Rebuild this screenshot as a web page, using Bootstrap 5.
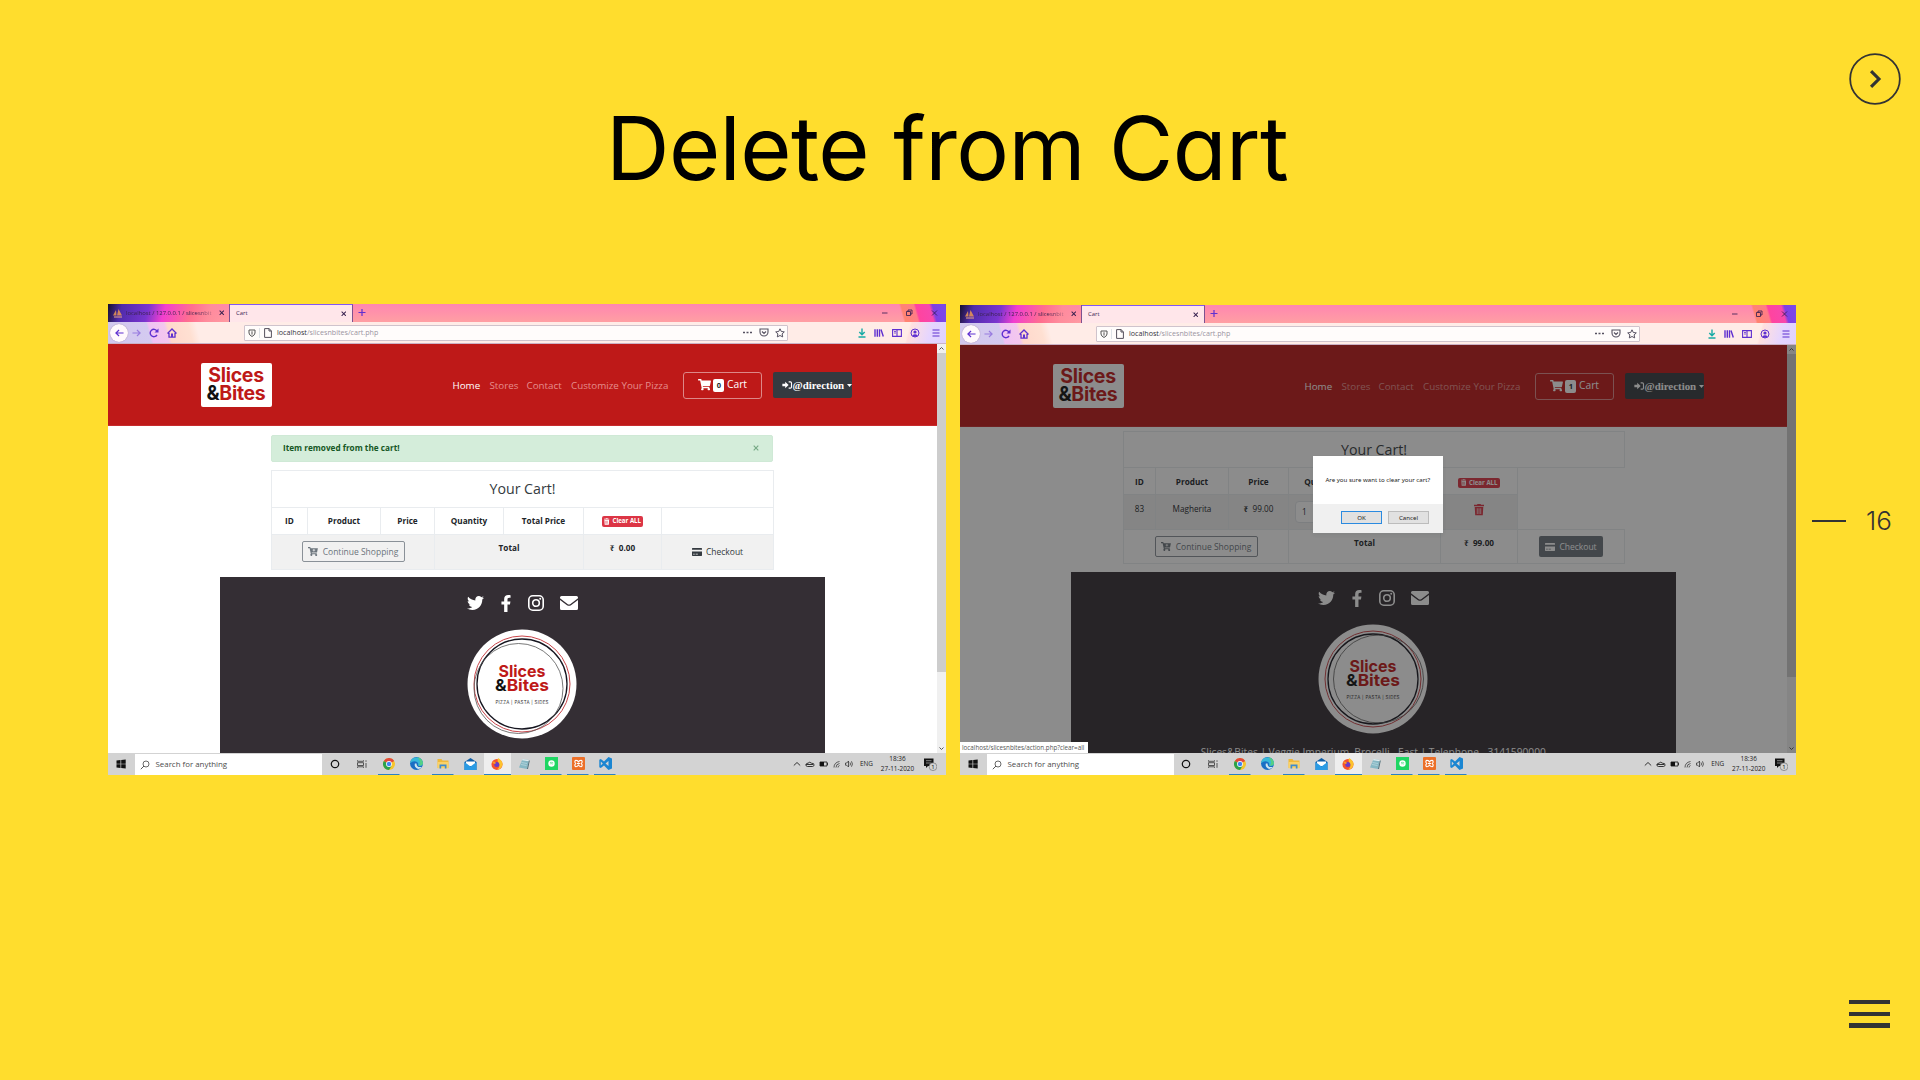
<!DOCTYPE html>
<html lang="en">
<head>
<meta charset="utf-8">
<title>Delete from Cart</title>
<link href="https://cdn.jsdelivr.net/npm/bootstrap@5.3.0/dist/css/bootstrap.min.css" rel="stylesheet">
<script src="https://cdn.jsdelivr.net/npm/bootstrap@5.3.0/dist/js/bootstrap.bundle.min.js" defer></script>
<style>
body{width:1920px;height:1080px;overflow:hidden;background:#ffdd2d;font-family:"Open Sans","Noto Sans",sans-serif;color:#212529}
svg{display:block;flex:none}
.stage{width:1796px;padding-left:108px}
.slide-title{height:304px;padding:95px 0 0 498px;font:400 88px/106px Inter,sans-serif;font-feature-settings:"cv11";letter-spacing:-.6px;color:#000;margin:0;white-space:nowrap}
.rail{width:124px;color:#333}
.rail-next{margin:53px 0 0 52.5px}
.rail-page{margin:398px 0 0 16px;height:36px;font:300 26px/36px Inter,sans-serif;gap:20px}
.rail-page i{width:34px;height:2.5px;background:#333}
.rail-menu{margin:461px 0 0 53px;width:41px;gap:7.500px}
.rail-menu i{height:4.200px;background:#333}
.shot{width:838px;height:471px;overflow:hidden}
.shot-b{width:836px;height:470px;margin-top:1px}
.tabs{height:18px;font-size:5.900px;line-height:17px;color:#3a2350;background:linear-gradient(105deg,#17102e 0,#4f2cab 14px,#7a35cf 40px,#f23fcf 56px,#ff6f8f 82px,#ff8c9c 100px,transparent 125px),linear-gradient(74deg,transparent 765px,#ff8470 767px,#ff7c88 779px,#ff449f 781px,#f748ac 794px,#8040e2 797px,#7a4ae8 808px,#5c36b4 820px,#39236d 828px,#171127 831px),linear-gradient(#ff86b0,#ff9fa3)}
.tab-one{width:122px;padding-left:5px;gap:3px;border-right:1px solid #7d5190}
.tab-one .tab-name{width:90px;overflow:hidden;white-space:nowrap;-webkit-mask:linear-gradient(90deg,#000 70px,transparent 92px)}
.tab-two{width:123px;background:#ffe6ea;border-top:1px solid #8257f5;border-right:1px solid #7d5190;padding:0 6px 0 6px}
.win-ctl{margin-top:4px}
.tools{height:22px;padding:0 6px 0 2px;background:linear-gradient(75deg,#d1c8ed 0,#d4caf0 42px,#f0c2f4 44px,#f3c7ee 59px,#ffd8cc 62px,#ffe0d2 82px,transparent 90px),linear-gradient(105deg,transparent 775px,#ffe0df 777px,#e5d5ff 797px,#d8cffa 835px),#ffece7;border-bottom:1px solid #cbb2c6;color:#5f30d0}
.tool-set{gap:8px}
.back-btn{width:18px;height:18px;border-radius:50%;background:#fff9fc;box-shadow:0 0 1px #886f9b;display:flex;align-items:center;justify-content:center}
.fwd{transform:scaleX(-1);margin:0 8px 0 4px}
.address{margin-left:67px;width:544px;height:16px;background:#fffcfb;border:1px solid #cfc3cc;border-radius:1px;padding:0 2px 0 3px;font-size:7.150px;color:#9a939f;gap:2.500px}
.address b{font-weight:500;color:#35303c}
.url{margin-left:3px}
.site{height:409px;background:#fff}
.shot-b .site{height:408px}
.site-page{width:829px;overflow:hidden}
.shot-b .site-page{width:827px}
.bar-v{width:9px;background:#f0f0f0;color:#555}
.bar-v i{background:#cdcdcd;height:319px}
.shot-b .bar-v i{height:323px}
.brand-bar{height:82px;background:#be1918;display:grid;grid-template-columns:71px 181px 37px 37px 44.500px 112px 79px 11px 78.500px;padding-left:92.500px;align-items:center;color:#e58e8d;font-size:9.800px;white-space:nowrap;border-bottom:1px solid #c72b2d}
.brand-bar>span{padding-top:3.500px}
.brand-logo{height:44px;background:#fff;border-radius:2px;font:700 19.500px/17.500px Inter,sans-serif;color:#be1918;text-align:center;padding-top:4.500px;letter-spacing:-.3px}
.brand-logo em{font-style:normal;color:#111}
.cart-link{height:27px;margin-top:1px;border:1px solid #dd8888;border-radius:3px;color:#fff;font-size:10.300px;gap:2.500px}
.cart-link b{background:#fff;color:#212529;border-radius:2px;width:11px;height:13px;font-size:7.500px;line-height:13px;text-align:center}
.dir-link{height:26px;background:#343a40;border-radius:2px;color:#fff;font:700 10.900px "Liberation Serif",serif;padding-left:9px;margin-top:1px}
.dir-link svg+span{margin-left:-.5px}
.dir-link .tip{margin-left:3px}
.notice{width:502px;height:27px;margin:8.500px 0 8px 163px;padding:0 13px 0 11px;background:#d4edda;border:1px solid #cfe9d6;border-radius:2px;color:#155724;font-size:8.200px;font-weight:700}
.notice svg{color:#74a883}
.cart-grid{width:502px;table-layout:fixed;margin-left:163px;border-collapse:collapse;font-size:8.200px;text-align:center}
.shot-b .cart-grid{width:501px;margin-top:4px}
.cart-grid td,.cart-grid th{border:1px solid #e9ecef;padding:0;vertical-align:middle;line-height:12px;color:#212529;white-space:nowrap}
.shot-b .cart-grid th{padding-top:2px}
.cart-grid .shade>td{background:#f1f1f1}
.cart-grid .grid-title td{font-size:14.200px;line-height:18px;color:#343a40}
.cart-grid .up{padding-bottom:7px}
.qty{margin:0 6px;padding:4px 6px}
.btn-clear{background:#dc3545;color:#fff;border-radius:2px;font-size:6.100px;font-weight:700;line-height:10px;padding:0 2.500px;height:10.500px;gap:3px;display:inline-flex;align-items:center;vertical-align:middle}
.btn-line{border:1px solid #8a9198;color:#6c757d;border-radius:2px;height:21px;width:103px;gap:5px;font-size:8.500px;display:inline-flex;align-items:center;justify-content:center;vertical-align:middle}
.btn-pay{height:21px;width:64px;gap:4px;font-size:8.500px;border-radius:2px;display:inline-flex;align-items:center;justify-content:center;vertical-align:middle;color:#343a40}
.btn-pay.on{background:#6c757d;color:#fff}
.foot{width:605px;height:186px;margin:7.500px 0 0 111.500px;background:#342e34;color:#fff;padding-top:17px}
.shot-b .foot{margin:8px 0 0 110.800px}
.social{height:18px;gap:16px}
.seal{margin-top:16.500px}
.foot-line{font-size:10.200px;line-height:14px;margin-top:11.500px;white-space:nowrap}
.taskbar{height:22px;background:#d3d3d3;font-size:6.400px;color:#222}
.start{width:26.500px}
.finder{width:187px;height:20.500px;margin-top:1px;background:#fff;font-size:7.900px;color:#4c4c4c;padding-left:5px;gap:6px}
.apps{width:297px;height:22px}
.apps>span{width:27px;display:flex;align-items:center;justify-content:center;border-bottom:1.500px solid transparent;background-clip:padding-box}
.apps>.run{background:linear-gradient(#2c80c4,#2c80c4) center bottom/21.500px 1.500px no-repeat border-box}
.apps>.focus{background:#eee;border-bottom-color:#2c80c4;background-clip:padding-box}
.shot-b .apps{margin-left:-.8px}
.tray{margin-left:174.500px;gap:3px}
.clock{width:37px;line-height:10px;text-align:center;margin-left:3px}
.tray .news{margin-left:5px}
.dim{inset:0;background:rgba(25,25,25,.5)}
.ask{left:353px;top:110.500px;width:129.500px;height:77.500px;background:#fff;color:#222;font-family:"Noto Sans",sans-serif;font-size:6.100px}
.ask-text{height:48px}
.ask-row{height:29.500px;background:#f0f0f0;gap:6px;padding:0 13.500px 2px 0}
.ask-row span{width:41px;height:13px;background:#e1e1e1;border:1px solid #bcbcbc;text-align:center;line-height:11px}
.ask-row .hot{border-color:#2a8ae0}
.hint{left:0;bottom:0;height:11px;width:127.500px;background:#fff;font-size:6.250px;line-height:12px;padding-left:2px;color:#555;white-space:nowrap}
</style>
</head>
<body>
<svg width="0" height="0" class="position-absolute">
<defs>
<symbol id="cart" viewBox="0 0 576 512"><path fill="currentColor" d="M528.12 301.319l47.273-208C578.806 78.301 567.391 64 551.99 64H159.208l-9.166-44.81C147.758 8.021 137.93 0 126.529 0H24C10.745 0 0 10.745 0 24v16c0 13.255 10.745 24 24 24h69.883l70.248 343.435C147.325 417.1 136 435.222 136 456c0 30.928 25.072 56 56 56s56-25.072 56-56c0-15.674-6.447-29.835-16.824-40h209.647C430.447 426.165 424 440.326 424 456c0 30.928 25.072 56 56 56s56-25.072 56-56c0-22.172-12.888-41.332-31.579-50.405l5.517-24.276c3.413-15.018-8.002-29.319-23.403-29.319H218.117l-6.545-32h293.145c11.206 0 20.92-7.754 23.403-18.681z"/></symbol>
<symbol id="cartplus" viewBox="0 0 576 512"><path fill="currentColor" fill-rule="evenodd" d="M0 0h130l20 64h420l-50 256H212l7 32h290l-12 60a56 56 0 1 1-60 4H232a56 56 0 1 1-68-9L94 64H0zM320 110v50h-55v40h55v55h40v-55h55v-40h-55v-50z"/></symbol>
<symbol id="signin" viewBox="0 0 18 14"><path fill="currentColor" d="M0 5h5V1.500L11 7l-6 5.500V9H0z"/><path d="M11 1.500h3q2 0 2 2v7q0 2-2 2h-3" fill="none" stroke="currentColor" stroke-width="2"/></symbol>
<symbol id="trash" viewBox="0 0 14 16"><path fill="currentColor" fill-rule="evenodd" d="M0 1h4l1-1h4l1 1h4v2H0zM1 4h12l-.7 12H1.700zM4 6v8h1V6zm2.500 0v8h1V6zM9 6v8h1V6z"/></symbol>
<symbol id="card" viewBox="0 0 18 14"><path fill="currentColor" fill-rule="evenodd" d="M1 0h16q1 0 1 1v2H0V1q0-1 1-1zM0 6h18v7q0 1-1 1H1q-1 0-1-1zm2 4v1.500h3V10zm4.500 0v1.500h4V10z"/></symbol>
<symbol id="twitter" viewBox="0 0 512 512"><path fill="currentColor" d="M459.37 151.716c.325 4.548.325 9.097.325 13.645 0 138.72-105.583 298.558-298.558 298.558-59.452 0-114.68-17.219-161.137-47.106 8.447.974 16.568 1.299 25.34 1.299 49.055 0 94.213-16.568 130.274-44.832-46.132-.975-84.792-31.188-98.112-72.772 6.498.974 12.995 1.624 19.818 1.624 9.421 0 18.843-1.3 27.614-3.573-48.081-9.747-84.143-51.98-84.143-102.985v-1.299c13.969 7.797 30.214 12.67 47.431 13.319-28.264-18.843-46.781-51.005-46.781-87.391 0-19.492 5.197-37.36 14.294-52.954 51.655 63.675 129.3 105.258 216.365 109.807-1.624-7.797-2.599-15.918-2.599-24.04 0-57.828 46.782-104.934 104.934-104.934 30.213 0 57.502 12.67 76.67 33.137 23.715-4.548 46.456-13.32 66.599-25.34-7.798 24.366-24.366 44.833-46.132 57.827 21.117-2.273 41.584-8.122 60.426-16.243-14.292 20.791-32.161 39.308-52.628 54.253z"/></symbol>
<symbol id="facebook" viewBox="0 0 320 512"><path fill="currentColor" d="M279.14 288l14.22-92.66h-88.91v-60.13c0-25.35 12.42-50.06 52.24-50.06h40.42V6.26S260.43 0 225.36 0c-73.22 0-121.080 44.380-121.080 124.720v70.620H22.890V288h81.390v224h100.170V288z"/></symbol>
<symbol id="insta" viewBox="0 0 16 16"><g fill="none" stroke="currentColor" stroke-width="1.600"><rect x=".8" y=".8" width="14.400" height="14.400" rx="4"/><circle cx="8" cy="8" r="3.300"/></g><circle cx="12.200" cy="3.800" r="1" fill="currentColor"/></symbol>
<symbol id="mail" viewBox="0 0 18 14"><path fill="currentColor" d="M1.500 0h15Q18 0 18 1.500v.8L10.500 8Q9 9 7.500 8L0 2.300v-.8Q0 0 1.500 0zM0 4l7 5.200q2 1.300 4 0L18 4v8.500q0 1.500-1.500 1.500h-15Q0 14 0 12.500z"/></symbol>
<symbol id="cross" viewBox="0 0 6 6"><path d="M.7.7l4.600 4.600M5.300.7L.7 5.300" stroke="currentColor" stroke-width="1.100"/></symbol>
<symbol id="pma" viewBox="0 0 10 9"><path d="M0 6.500L3 1l.5 5.500zM4 6.500L5.500 0 9 6.500z" fill="#f5a04c" opacity=".8"/><path d="M1 8h8" stroke="#e7a58a" stroke-width="1"/></symbol>
<symbol id="left" viewBox="0 0 10 8"><path d="M9.500 4H1M4.500.7L1 4l3.500 3.300" fill="none" stroke="currentColor" stroke-width="1.300"/></symbol>
<symbol id="reload" viewBox="0 0 10 10"><path d="M8 7A3.700 3.700 0 1 1 8 3" fill="none" stroke="currentColor" stroke-width="1.400"/><path d="M9.500.5v4H5.500z" fill="currentColor"/></symbol>
<symbol id="home" viewBox="0 0 10 10"><path d="M.5 5.500L5 1l4.500 4.500M2 5v4.200h6V5" fill="none" stroke="currentColor" stroke-width="1.300"/><path d="M4 5.500h2v3.500H4z" fill="currentColor"/></symbol>
<symbol id="shield" viewBox="0 0 8 8"><path d="M1 1h6v3q0 2-3 3.500Q1 6 1 4z" fill="none" stroke="#555" stroke-width="1"/><path d="M4 2.300v3.300" stroke="#555"/></symbol>
<symbol id="page" viewBox="0 0 8 10"><path d="M.6.6h4.600l2.200 2.400v6.400H.6zM5 .6V3h2.400" fill="none" stroke="#55505c" stroke-width="1"/></symbol>
<symbol id="pocket" viewBox="0 0 10 9"><path d="M1 1h8v3a4 4 0 0 1-8 0zM3 3.500L5 5.500l2-2" fill="none" stroke="#555060" stroke-width="1.100"/></symbol>
<symbol id="star" viewBox="0 0 10 10"><path d="M5 .8l1.300 2.700 3 .4-2.200 2 .6 3L5 7.500 2.300 8.900l.6-3-2.200-2 3-.4z" fill="none" stroke="#555060" stroke-width="1"/></symbol>
<symbol id="downl" viewBox="0 0 8 10"><path d="M4 .5v6M1.300 4L4 6.700 6.700 4M.5 9h7" fill="none" stroke="#18aaa5" stroke-width="1.400"/></symbol>
<symbol id="books" viewBox="0 0 10 8"><path d="M1 .3v7.400M3.300.3v7.400M5.500.3v7.400M7 .5l2.300 7" stroke="currentColor" stroke-width="1.400"/></symbol>
<symbol id="side" viewBox="0 0 10 8"><path d="M.6.6h8.800v6.800H.6zM5 .6v6.800" fill="none" stroke="currentColor" stroke-width="1.100"/><path d="M2 2.500h2M2 4h2" stroke="currentColor" stroke-width=".8"/></symbol>
<symbol id="user" viewBox="0 0 10 10"><circle cx="5" cy="5" r="4" fill="none" stroke="currentColor"/><circle cx="5" cy="4" r="1.600" fill="currentColor"/><path d="M2.200 7.500q2.800-2.500 5.600 0L5 9z" fill="currentColor"/></symbol>
<symbol id="burger" viewBox="0 0 8 8"><path d="M.5 1h7M.5 4h7M.5 7h7" stroke="currentColor" stroke-width="1.200"/></symbol>
<symbol id="wctl" viewBox="0 0 60 10"><g fill="none" stroke="#2d1a50" stroke-width=".8"><path d="M0 5h5.500M24.500 3.500h4v4h-4zM26 3.500V2h4v4h-1.500M50 2.500l5 5M55 2.500l-5 5"/></g></symbol>
<symbol id="win" viewBox="0 0 10 10"><path fill="#111" d="M.5 1.500l4-.5v3.700h-4zM5.200 1L9.700.5v4.200H5.200zM.5 5.300h4V9l-4-.5zM5.200 5.300h4.500v4.200L5.200 9z"/></symbol>
<symbol id="lens" viewBox="0 0 10 10"><circle cx="6" cy="4" r="3" fill="none" stroke="#444" stroke-width=".8"/><path d="M4 6L.8 9.200" stroke="#444" stroke-width=".9"/></symbol>
<symbol id="ring" viewBox="0 0 10 10"><circle cx="5" cy="5" r="3.700" fill="none" stroke="#111" stroke-width="1.200"/></symbol>
<symbol id="tview" viewBox="0 0 10 8"><path d="M.5.3v1h6v-1M.5 2.700h6v2.800h-6zM.5 7.800v-1h6v1M9 .3v1.500M9 3v4.800" fill="none" stroke="#333" stroke-width=".8"/></symbol>
<symbol id="chrome" viewBox="0 0 12 12"><circle cx="6" cy="6" r="6" fill="#f7c52d"/><path d="M6 6L.8 3A6 6 0 0 1 11.200 3z" fill="#e2483b"/><path d="M6 6L.8 3A6 6 0 0 0 6 12l2.500-4z" fill="#2ba24c"/><circle cx="6" cy="6" r="2.900" fill="#fff"/><circle cx="6" cy="6" r="2.200" fill="#4285f4"/></symbol>
<symbol id="edge" viewBox="0 0 12 12"><circle cx="6" cy="6" r="6" fill="#1a6fc4"/><path d="M.2 5a6 6 0 0 1 11.800 1q-.5 2.500-3.500 2.300Q7 8 7.700 6.500 7 4 4 4 1.500 4 .2 6z" fill="#38b9d8"/><path d="M7 .2A6 6 0 0 1 12 6.500Q11 8.500 8 8q3-3-1-7.800z" fill="#54cf86"/><path d="M4.500 6q-1 3.500 3 5 2 0 3.300-1.800Q6 10 6 6z" fill="#cfe6ef"/></symbol>
<symbol id="folder" viewBox="0 0 12 11"><path d="M.5 1h4l1 1.500h6V10H.5z" fill="#f0b93a"/><path d="M.5 4h11v6.300H.5z" fill="#fad268"/><path d="M2.500 10.500V6.500h7v4H7.800V8.200H4.200v2.300z" fill="#3d8bd0"/></symbol>
<symbol id="post" viewBox="0 0 12 12"><path d="M0 4l6-4 6 4v8H0z" fill="#0f5fa8"/><path d="M1.500 3.500h9V8h-9z" fill="#fff"/><path d="M0 4l6 4.500L12 4v8H0z" fill="#2a9be4"/></symbol>
<symbol id="fox" viewBox="0 0 12 12"><circle cx="6" cy="6.400" r="5.500" fill="#f5532d"/><path d="M7 0q5 3 4.500 7Q10 11.500 6 11.500 10 9 7.500 5 6 3 7 0z" fill="#fdc32e"/><circle cx="5.800" cy="6.500" r="2.500" fill="#6a3bc8"/><path d="M1 4q3-1.500 4 1.200L3 6z" fill="#ff9a24"/></symbol>
<symbol id="note" viewBox="0 0 12 12"><path d="M4.500 1L11 2 9 11l-8-1.500z" fill="#86b8c4"/><path d="M4.500 1L11 2l-.3 1.200L4 2.200z" fill="#e5eef0"/><path d="M11 2l.7 1L10 11H9z" fill="#4e6d78"/><path d="M3.500 4.500l5.500 1M3 6.500l5.500 1" stroke="#cae2e8" stroke-width=".6"/></symbol>
<symbol id="spot" viewBox="0 0 13 13"><path d="M0 0h13v13H0z" fill="#1fd663"/><circle cx="6.500" cy="6.500" r="3.200" fill="#fff"/><path d="M5 5.500q1.800-.5 3.200.4M5.200 6.800q1.500-.4 2.600.3" stroke="#1fd663" stroke-width=".6" fill="none"/></symbol>
<symbol id="xampp" viewBox="0 0 13 13"><rect width="13" height="13" rx="1" fill="#ec6f28"/><path d="M4 3.300q2 0 2.500 2Q7 3.300 9 3.300q1.500.2 1 2.200l-.8 1 .8 1q.5 2-1 2.200-2 0-2.500-2-.5 2-2.500 2-1.500-.2-1-2.200l.8-1-.8-1q-.5-2 1-2.200zM5 6.500h3" fill="none" stroke="#fff" stroke-width="1.100"/></symbol>
<symbol id="code" viewBox="0 0 13 13"><path d="M9.500 0L13 1.500v10L9.500 13 5 8.500 1.800 11 .3 10.200V2.800L1.800 2 5 4.500zM9.500 4L6.500 6.500l3 2.500zM1.800 4.500v4l2-2z" fill="#1b86d2" fill-rule="evenodd"/></symbol>
<symbol id="trayi" viewBox="0 0 60 10"><g fill="none" stroke="#222" stroke-width=".9"><path d="M.8 6.500L4 3.500l3.200 3"/><path d="M14.500 7.500q-2-.3-1.600-2Q13.500 4 15 4.200q1.700-2 3.500 0 3 0 2.500 2-.3 1.300-1.500 1.300zM13 5.500h7"/><path d="M27 3h7v4h-7zM34.500 4v2"/><path d="M41 8.500q0-5 5.500-6M43 8.500q0-3.500 3.500-4M45 8.500q0-1.500 1.500-2" stroke-width=".7"/><path d="M52.500 4h1.200L55.500 2v6L53.700 6.200h-1.200zM57 3.500q1 1.500 0 3M58.500 2.300q1.800 2.700 0 5.400" stroke-width=".7"/></g><path fill="#111" d="M27 3h4v4h-4z"/></symbol>
<symbol id="bell" viewBox="0 0 13 13"><path d="M0 .5h9.500v7.500H4L2 10V8H0z" fill="#111"/><path d="M2 2.700h5.500M2 5h5.500" stroke="#d3d3d3" stroke-width=".6"/><circle cx="9" cy="8.700" r="3.900" fill="#d3d3d3" stroke="#555" stroke-width=".5"/><text x="9" y="11" font-size="6" text-anchor="middle" fill="#111">1</text></symbol>
</defs>
</svg>

<template id="browser-bars">
  <div class="tabs d-flex">
    <div class="tab-one d-flex align-items-center"><svg width="10" height="9"><use href="#pma"/></svg><span class="tab-name">localhost / 127.0.0.1 / slicesnbit</span><svg width="5.500" height="5.500"><use href="#cross"/></svg></div>
    <div class="tab-two d-flex align-items-center justify-content-between"><span>Cart</span><svg width="5.500" height="5.500"><use href="#cross"/></svg></div>
    <svg class="ms-1 mt-1" width="9" height="9" viewBox="0 0 9 9"><path d="M5 1v7M1.500 4.500h7" stroke="#5f30d0" stroke-width="1.200"/></svg>
    <svg class="win-ctl ms-auto me-1" width="60" height="10"><use href="#wctl"/></svg>
  </div>
  <div class="tools d-flex align-items-center">
    <span class="back-btn"><svg width="9" height="8"><use href="#left"/></svg></span>
    <svg width="9" height="8" class="fwd opacity-50"><use href="#left"/></svg>
    <svg width="10" height="10" class="me-2"><use href="#reload"/></svg>
    <svg width="10" height="10"><use href="#home"/></svg>
    <div class="address d-flex align-items-center"><svg width="8" height="8"><use href="#shield"/></svg><span class="border-start ps-1"><svg width="8" height="10"><use href="#page"/></svg></span><span class="url"><b>localhost</b>/slicesnbites/cart.php</span>
      <svg class="ms-auto me-1" width="9" height="3" viewBox="0 0 9 3"><path d="M0 1.500h2M3.500 1.500h2M7 1.500h2" stroke="#555060" stroke-width="1.600"/></svg><svg width="10" height="9" class="me-1"><use href="#pocket"/></svg><svg width="10" height="10"><use href="#star"/></svg></div>
    <div class="tool-set d-flex align-items-center ms-auto"><svg width="8" height="10"><use href="#downl"/></svg><svg width="10" height="8"><use href="#books"/></svg><svg width="10" height="8"><use href="#side"/></svg><svg width="10" height="10" class="me-1"><use href="#user"/></svg><svg width="8" height="8"><use href="#burger"/></svg></div>
  </div>
</template>
<template id="scroll-bar">
  <svg width="9" height="9" viewBox="0 0 9 9"><path d="M2.500 5.500l2-2 2 2" fill="none" stroke="currentColor"/></svg><i></i><svg class="mt-auto" width="9" height="9" viewBox="0 0 9 9"><path d="M2.500 3.500l2 2 2-2" fill="none" stroke="currentColor"/></svg>
</template>
<template id="social-row">
  <svg width="17" height="18"><use href="#twitter"/></svg><svg width="12" height="17"><use href="#facebook"/></svg><svg width="16" height="16"><use href="#insta"/></svg><svg width="18" height="14"><use href="#mail"/></svg>
</template>
<template id="task-items">
  <div class="start d-flex justify-content-center"><svg width="10" height="10"><use href="#win"/></svg></div>
  <div class="finder d-flex align-items-center"><svg width="10" height="10"><use href="#lens"/></svg>Search for anything</div>
  <div class="apps d-flex"><span><svg width="10" height="10"><use href="#ring"/></svg></span><span><svg width="10" height="8"><use href="#tview"/></svg></span><span class="run"><svg width="12" height="12"><use href="#chrome"/></svg></span><span><svg width="13" height="13"><use href="#edge"/></svg></span><span class="run"><svg width="12" height="11"><use href="#folder"/></svg></span><span><svg width="13" height="12"><use href="#post"/></svg></span><span class="focus"><svg width="12" height="12"><use href="#fox"/></svg></span><span><svg width="12" height="12"><use href="#note"/></svg></span><span class="run"><svg width="13" height="13"><use href="#spot"/></svg></span><span class="run"><svg width="13" height="13"><use href="#xampp"/></svg></span><span class="run"><svg width="13" height="13"><use href="#code"/></svg></span></div>
  <div class="tray d-flex align-items-center"><svg width="60" height="10"><use href="#trayi"/></svg><span class="ms-1">ENG</span><span class="clock">18:36<br>27-11-2020</span><svg class="news" width="13" height="13"><use href="#bell"/></svg></div>
</template>

<div class="d-flex h-100">
  <main class="stage">
    <h1 class="slide-title">Delete from Cart</h1>
    <div class="d-flex align-items-start justify-content-between">
      <section class="shot">
        <div data-part="browser-bars"></div>
        <div class="site d-flex">
          <div class="site-page">
            <nav class="brand-bar">
              <div class="brand-logo">Slices<br><em>&amp;</em>Bites</div><span></span>
              <span class="text-white">Home</span><span>Stores</span><span>Contact</span><span>Customize Your Pizza</span>
              <div class="cart-link d-flex align-items-center justify-content-center"><svg width="13" height="11.500"><use href="#cart"/></svg><b>0</b><span>Cart</span></div><span></span>
              <div class="dir-link d-flex align-items-center"><svg width="11" height="8"><use href="#signin"/></svg><span>@direction</span><svg class="tip" width="5" height="3" viewBox="0 0 5 3"><path d="M0 0h5L2.500 3z" fill="#fff"/></svg></div>
            </nav>
            <div class="notice d-flex align-items-center justify-content-between"><span>Item removed from the cart!</span><svg width="6" height="6"><use href="#cross"/></svg></div>
            <table class="cart-grid">
              <colgroup><col style="width:36px"><col style="width:73px"><col style="width:54px"><col style="width:69px"><col style="width:80px"><col style="width:78px"><col style="width:112px"></colgroup>
              <tr class="grid-title" style="height:37px"><td colspan="7">Your Cart!</td></tr>
              <tr style="height:27px"><th>ID</th><th>Product</th><th>Price</th><th>Quantity</th><th>Total Price</th><th><span class="btn-clear"><svg width="5.500" height="7"><use href="#trash"/></svg>Clear ALL</span></th><th></th></tr>
              <tr class="shade" style="height:35px"><td colspan="3"><span class="btn-line"><svg width="10" height="9"><use href="#cartplus"/></svg>Continue Shopping</span></td><td colspan="2" class="up"><b>Total</b></td><td class="up"><b>₹&nbsp; 0.00</b></td><td><span class="btn-pay"><svg width="10" height="8"><use href="#card"/></svg>Checkout</span></td></tr>
            </table>
            <footer class="foot">
              <div class="social d-flex align-items-center justify-content-center" data-part="social-row"></div>
              <svg class="seal mx-auto" width="110" height="110" viewBox="0 0 110 110"><circle cx="55" cy="55" r="54.500" fill="#fff"/><g fill="none"><circle cx="55" cy="55" r="48" stroke="#c9454a" stroke-width="1"/><circle cx="55" cy="55" r="45" stroke="#15151f" stroke-width="1.300"/><ellipse cx="51.500" cy="59.500" rx="44.500" ry="45" stroke="#555" stroke-width=".8"/></g><g font-family="Inter" font-weight="700" text-anchor="middle" fill="#be1918"><text x="55" y="47.500" font-size="16.500" textLength="47" lengthAdjust="spacingAndGlyphs">Slices</text><text x="55" y="62" font-size="16.500" textLength="54" lengthAdjust="spacingAndGlyphs"><tspan fill="#111">&amp;</tspan>Bites</text><text x="55" y="75" font-size="4.500" font-weight="400" fill="#333" textLength="53">PIZZA | PASTA | SIDES</text></g></svg>
            </footer>
          </div>
          <div class="bar-v d-flex flex-column" data-part="scroll-bar"></div>
        </div>
        <div class="taskbar d-flex align-items-center" data-part="task-items"></div>
      </section>
      <section class="shot shot-b">
        <div data-part="browser-bars"></div>
        <div class="site d-flex position-relative">
          <div class="site-page">
            <nav class="brand-bar">
              <div class="brand-logo">Slices<br><em>&amp;</em>Bites</div><span></span>
              <span class="text-white">Home</span><span>Stores</span><span>Contact</span><span>Customize Your Pizza</span>
              <div class="cart-link d-flex align-items-center justify-content-center"><svg width="13" height="11.500"><use href="#cart"/></svg><b>1</b><span>Cart</span></div><span></span>
              <div class="dir-link d-flex align-items-center"><svg width="11" height="8"><use href="#signin"/></svg><span>@direction</span><svg class="tip" width="5" height="3" viewBox="0 0 5 3"><path d="M0 0h5L2.500 3z" fill="#fff"/></svg></div>
            </nav>
            <table class="cart-grid">
              <colgroup><col style="width:32px"><col style="width:73px"><col style="width:60px"><col style="width:68px"><col style="width:84px"><col style="width:77px"><col style="width:107px"></colgroup>
              <tr class="grid-title" style="height:36px"><td colspan="7">Your Cart!</td></tr>
              <tr style="height:27px"><th>ID</th><th>Product</th><th>Price</th><th>Quantity</th><th>Total Price</th><th><span class="btn-clear"><svg width="5.500" height="7"><use href="#trash"/></svg>Clear ALL</span></th></tr>
              <tr class="shade" style="height:35px"><td class="up">83</td><td class="up">Magherita</td><td class="up"><b>₹</b>&nbsp; 99.00</td><td><span class="qty d-block bg-white border rounded-1 text-start">1</span></td><td></td><td class="pb-1"><svg class="mx-auto text-danger" width="10" height="11.500"><use href="#trash"/></svg></td></tr>
              <tr style="height:34px"><td colspan="3"><span class="btn-line"><svg width="10" height="9"><use href="#cartplus"/></svg>Continue Shopping</span></td><td colspan="2" class="up"><b>Total</b></td><td class="up"><b>₹&nbsp; 99.00</b></td><td><span class="btn-pay on"><svg width="10" height="8"><use href="#card"/></svg>Checkout</span></td></tr>
            </table>
            <footer class="foot">
              <div class="social d-flex align-items-center justify-content-center" data-part="social-row"></div>
              <svg class="seal mx-auto" width="110" height="110" viewBox="0 0 110 110"><circle cx="55" cy="55" r="54.500" fill="#fff"/><g fill="none"><circle cx="55" cy="55" r="48" stroke="#c9454a" stroke-width="1"/><circle cx="55" cy="55" r="45" stroke="#15151f" stroke-width="1.300"/><ellipse cx="60.500" cy="55" rx="45" ry="44" stroke="#555" stroke-width=".8"/></g><g font-family="Inter" font-weight="700" text-anchor="middle" fill="#be1918"><text x="55" y="47.500" font-size="16.500" textLength="47" lengthAdjust="spacingAndGlyphs">Slices</text><text x="55" y="62" font-size="16.500" textLength="54" lengthAdjust="spacingAndGlyphs"><tspan fill="#111">&amp;</tspan>Bites</text><text x="55" y="75" font-size="4.500" font-weight="400" fill="#333" textLength="53">PIZZA | PASTA | SIDES</text></g></svg>
              <div class="foot-line text-center">Slices&amp;Bites | Veggie Imperium, Brocelli - East | Telephone - 3141590000</div>
            </footer>
          </div>
          <div class="bar-v d-flex flex-column" data-part="scroll-bar"></div>
          <div class="dim position-absolute"></div>
          <div class="ask position-absolute shadow-sm"><div class="ask-text d-flex align-items-center justify-content-center">Are you sure want to clear your cart?</div><div class="ask-row d-flex align-items-center justify-content-end"><span class="hot">OK</span><span>Cancel</span></div></div>
          <div class="hint position-absolute">localhost/slicesnbites/action.php?clear=all</div>
        </div>
        <div class="taskbar d-flex align-items-center" data-part="task-items"></div>
      </section>
    </div>
  </main>
  <aside class="rail">
    <svg class="rail-next" width="52" height="52" viewBox="0 0 53 53"><circle cx="26.500" cy="26.500" r="25.300" fill="none" stroke="#333" stroke-width="1.800"/><path d="M22.500 18.500l8 8-8 8" fill="none" stroke="#333" stroke-width="3.200"/></svg>
    <div class="rail-page d-flex align-items-center"><i></i><span>16</span></div>
    <div class="rail-menu d-flex flex-column"><i></i><i></i><i></i></div>
  </aside>
</div>
<script>
document.querySelectorAll('[data-part]').forEach(function (el) {
  el.appendChild(document.getElementById(el.dataset.part).content.cloneNode(true));
});
</script>
</body>
</html>
